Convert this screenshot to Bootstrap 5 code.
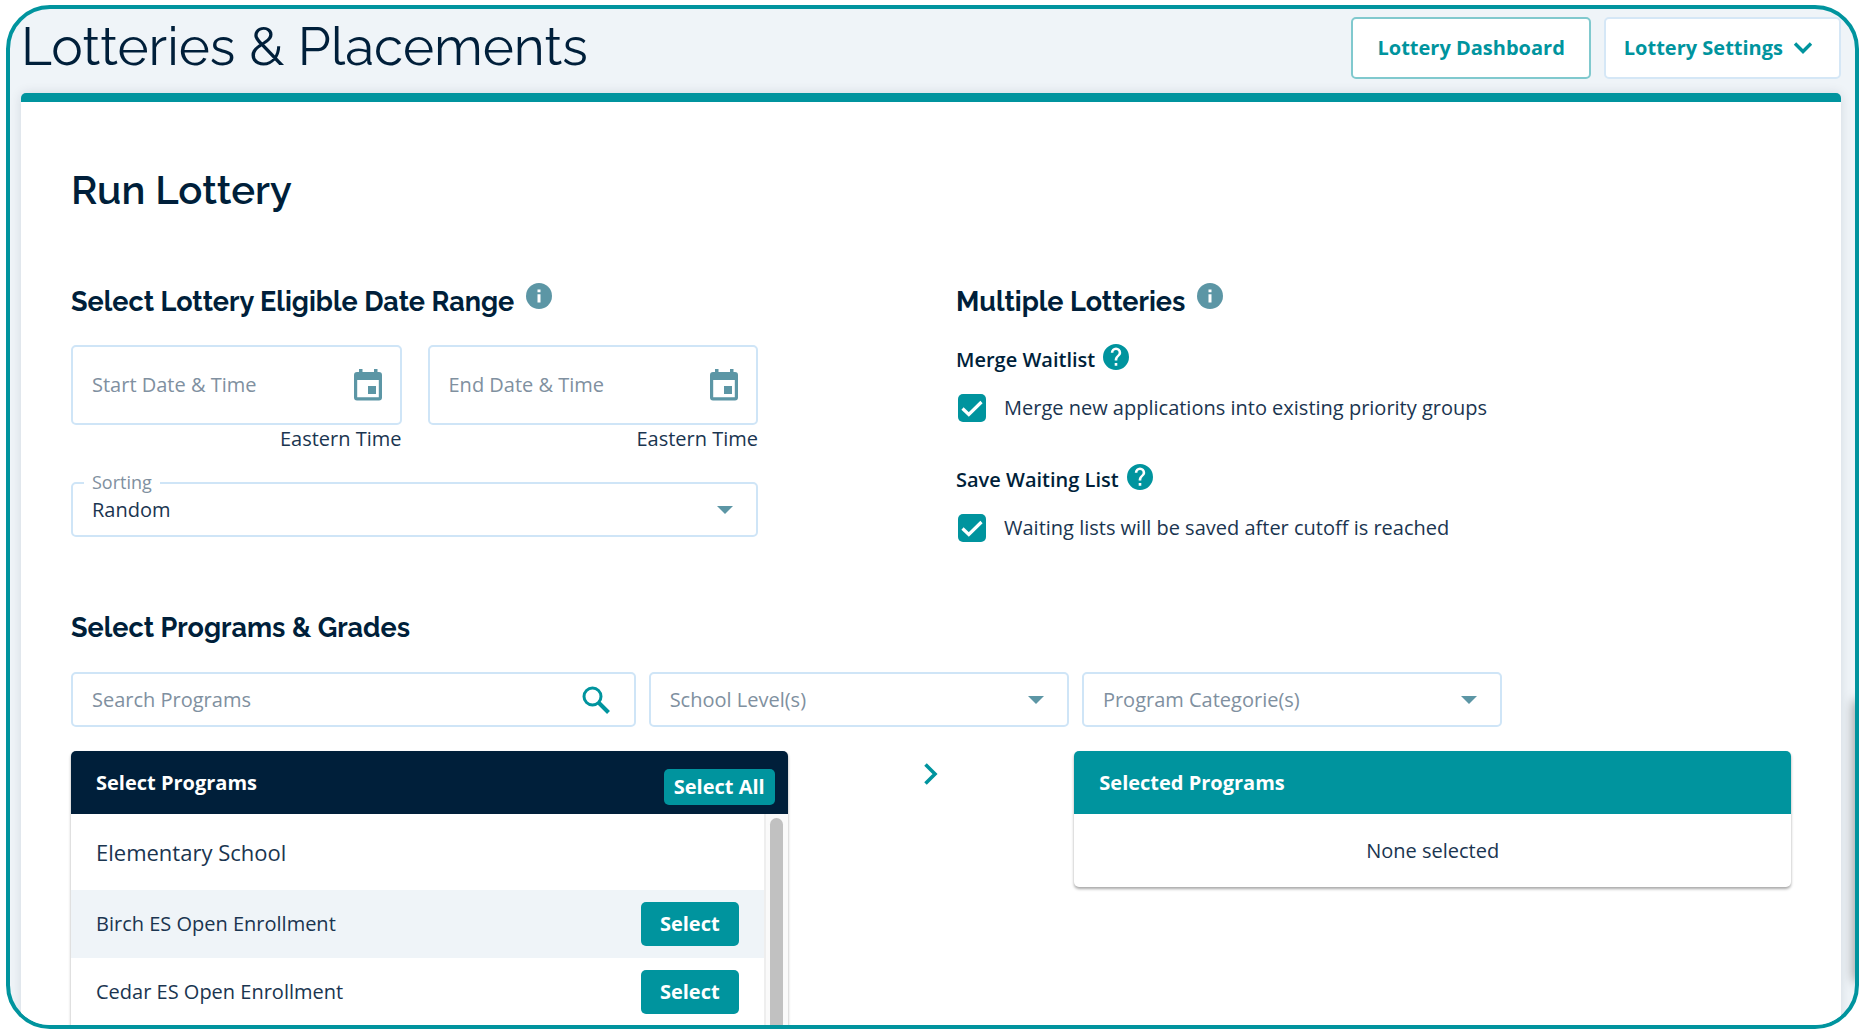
<!DOCTYPE html>
<html lang="en">
<head>
<meta charset="utf-8">
<meta name="viewport" content="width=device-width, initial-scale=1">
<title>Lotteries &amp; Placements</title>
<link href="https://cdn.jsdelivr.net/npm/bootstrap@5.3.0/dist/css/bootstrap.min.css" rel="stylesheet">
<style>
:root{--teal:#00949e;--navy:#001f3a;--ink:#1a3550;--muted-ink:#8090a0;--slate:#5c96a5;--line:#cfe5f7;--mist:#eff4f8}
body{font-family:"Open Sans","Noto Sans",sans-serif;font-size:20px;line-height:28px;color:var(--ink);background:#fff}
h1,h2,h3{font-family:Raleway,Lato,sans-serif;color:var(--navy);margin:0}
h1{font-size:53px;line-height:58px;font-weight:400}
h2{font-size:40px;line-height:48px;font-weight:600}
h3{font-size:27px;line-height:36px;font-weight:700}
svg{display:block;flex:none}
.app-frame{position:relative;height:calc(100vh - 11px);margin:5px 6px 6px;padding:0 14px 0 11px;border:4px solid var(--teal);border-radius:44px;background:var(--mist);overflow:hidden}
.app-header{height:84px;padding:8px 0 14px}
.app-header .btn{height:62px;background:#fff;color:var(--teal);font-size:20px;font-weight:700;border-radius:5px}
.header-actions{gap:13px}
.btn-dash{border:2px solid #80c9ce;padding:0 24px}
.btn-settings{border:2px solid #d5e7f6;padding:0 26px 0 18px;gap:10px}
.app-panel{background:#fff;border-top:9px solid var(--teal);border-radius:5px;padding:64px 50px 0;box-shadow:0 0 12px rgba(0,31,58,.12);min-height:100%}
.wide-row{--bs-gutter-x:50px;padding-top:66px}
.filter-row{--bs-gutter-x:13px;margin-top:26px}
.section-title svg{margin-top:3px}
.programs-title{padding-top:68px}
.fields{max-width:687px;padding-top:25px}
.field-pair{gap:26px}
.field-box{border:2px solid var(--line);border-radius:5px;padding:0 18px 0 19px;background:#fff}
.field-box input{flex:1;min-width:0;border:0;outline:0;padding:0;background:transparent;color:var(--ink)}
input::placeholder{color:var(--muted-ink);opacity:1}
.date-box{height:80px}
.filter-box{height:55px;padding-right:20px}
.field-box button,.plain-btn{border:0;background:none;padding:0}
.form-select{height:55px;font-size:20px;line-height:28px;padding:0 60px 0 19px;border:2px solid var(--line);border-radius:5px;color:var(--muted-ink);background-color:#fff;background-size:16px 8px;background-position:right 23px center;background-image:url("data:image/svg+xml,%3Csvg xmlns='http://www.w3.org/2000/svg' viewBox='0 0 16 8'%3E%3Cpath d='M0 0h16L8 8z' fill='%235c96a5'/%3E%3C/svg%3E")}
.sorting{position:relative;margin-top:29px}
.sorting label{position:absolute;left:13px;top:-14px;padding:0 8px;background:#fff;color:var(--muted-ink);font-size:18px}
.sorting .form-select{color:var(--ink)}
.opt-title{font-size:20px;font-weight:600;color:var(--navy);margin-top:18px}
.opt-title svg{margin-top:2px}
.opt-next{margin-top:36px}
.opt-check{margin-top:20px}
.opt-check label{padding-left:18px}
.form-check-input{width:28px;height:28px;margin:0 0 0 2px;border:0;border-radius:4px;flex:none}
.form-check-input:checked{background-color:var(--teal);background-size:24px 24px;background-image:url("data:image/svg+xml,%3Csvg xmlns='http://www.w3.org/2000/svg' viewBox='0 0 24 24'%3E%3Cpath d='M2.5 12.5l6.300 6L21.500 6' fill='none' stroke='%23fff' stroke-width='3.200'/%3E%3C/svg%3E")}
.program-list{border-radius:5px;box-shadow:0 2px 3px rgba(0,0,0,.35);overflow:hidden}
.list-head{height:63px;color:#fff;font-weight:700;padding:0 13px 0 25px}
.head-navy{background:var(--navy)}
.head-teal{background:var(--teal)}
.btn-teal{--bs-btn-color:#fff;--bs-btn-bg:var(--teal);--bs-btn-hover-color:#fff;--bs-btn-hover-bg:#007f88;border:0;font-size:20px;line-height:28px;font-weight:700;border-radius:5px}
.btn-all{padding:4px 10px;margin-top:8px}
.btn-pick{padding:8px 19px}
.list-line{height:68px;padding:0 25px}
.list-line.group-line{height:76px;font-size:22px}
.list-line.tinted{background:var(--mist)}
.scroll-rail{width:24px;border-left:2px solid #eee;background:#fafafa;padding:4px 4px 0}
.scroll-thumb{width:13px;height:100%;border-radius:7px 7px 0 0;background:#c1c1c1}
.list-rows{min-height:240px}
.empty-note{height:73px}
.drawer-edge{position:absolute;right:-6px;top:692px;width:6px;height:280px;box-shadow:0 0 12px rgba(0,0,0,.6)}
</style>
</head>
<body>
<div class="app-frame">
  <header class="app-header d-flex justify-content-between align-items-start">
    <h1>Lotteries &amp; Placements</h1>
    <div class="d-flex header-actions">
      <button type="button" class="btn btn-dash">Lottery Dashboard</button>
      <button type="button" class="btn btn-settings d-flex align-items-center">Lottery Settings
        <svg width="20" height="14" viewBox="0 0 20 14"><path d="M2 2.500l8 8 8-8" fill="none" stroke="#00949e" stroke-width="3.400"/></svg>
      </button>
    </div>
  </header>
  <main class="app-panel">
    <h2>Run Lottery</h2>
    <div class="row wide-row">
      <section class="col-6">
        <div class="section-title d-flex align-items-start gap-2">
          <h3 class="pt-1">Select Lottery Eligible Date Range</h3>
          <svg class="ms-1" width="26" height="26" viewBox="0 0 26 26"><circle cx="13" cy="13" r="13" fill="#5c96a5"/><path d="M11.500 6.500h3v2.800h-3zM11.500 11.200h3v8.400h-3z" fill="#fff"/></svg>
        </div>
        <div class="fields">
          <div class="d-flex field-pair">
            <div class="flex-fill">
              <div class="field-box date-box d-flex align-items-center">
                <input type="text" placeholder="Start Date &amp; Time" aria-label="Start Date &amp; Time">
                <button type="button" aria-label="Pick start date"><svg width="28" height="32" viewBox="0 0 28 32"><path d="M5 0h3.500v3H20V0h3.500v3H25a3 3 0 0 1 3 3v22.500a3 3 0 0 1-3 3H3a3 3 0 0 1-3-3V6a3 3 0 0 1 3-3h2zM3.200 11v17.300h21.600V11zM14 17h8v8h-8z" fill="#5c96a5" fill-rule="evenodd"/></svg></button>
              </div>
              <div class="text-end">Eastern Time</div>
            </div>
            <div class="flex-fill">
              <div class="field-box date-box d-flex align-items-center">
                <input type="text" placeholder="End Date &amp; Time" aria-label="End Date &amp; Time">
                <button type="button" aria-label="Pick end date"><svg width="28" height="32" viewBox="0 0 28 32"><path d="M5 0h3.500v3H20V0h3.500v3H25a3 3 0 0 1 3 3v22.500a3 3 0 0 1-3 3H3a3 3 0 0 1-3-3V6a3 3 0 0 1 3-3h2zM3.200 11v17.300h21.600V11zM14 17h8v8h-8z" fill="#5c96a5" fill-rule="evenodd"/></svg></button>
              </div>
              <div class="text-end">Eastern Time</div>
            </div>
          </div>
          <div class="sorting">
            <select class="form-select" id="sorting"><option>Random</option></select>
            <label for="sorting">Sorting</label>
          </div>
        </div>
      </section>
      <section class="col-6">
        <div class="section-title d-flex align-items-start gap-2">
          <h3 class="pt-1">Multiple Lotteries</h3>
          <svg class="ms-1" width="26" height="26" viewBox="0 0 26 26"><circle cx="13" cy="13" r="13" fill="#5c96a5"/><path d="M11.500 6.500h3v2.800h-3zM11.500 11.200h3v8.400h-3z" fill="#fff"/></svg>
        </div>
        <div class="d-flex align-items-start gap-2 opt-title pt-1">
          <span class="pt-1">Merge Waitlist</span>
          <svg width="26" height="26" viewBox="0 0 24 24"><path d="M12 0a12 12 0 1 0 0 24 12 12 0 0 0 0-24zm1.200 20h-2.400v-2.400h2.400zm2.500-9.300l-1.100 1.100c-.9.900-1.400 1.600-1.400 3.400h-2.400v-.6c0-1.300.5-2.500 1.400-3.400l1.500-1.500c.4-.4.700-1 .7-1.700a2.400 2.400 0 0 0-4.800 0H7.200a4.800 4.800 0 0 1 9.600 0c0 1-.4 2-1.100 2.700z" fill="#00949e"/></svg>
        </div>
        <div class="d-flex align-items-center opt-check">
          <input class="form-check-input" type="checkbox" id="merge" checked>
          <label for="merge">Merge new applications into existing priority groups</label>
        </div>
        <div class="d-flex align-items-start gap-2 opt-title opt-next pt-1">
          <span class="pt-1">Save Waiting List</span>
          <svg width="26" height="26" viewBox="0 0 24 24"><path d="M12 0a12 12 0 1 0 0 24 12 12 0 0 0 0-24zm1.200 20h-2.400v-2.400h2.400zm2.500-9.300l-1.100 1.100c-.9.900-1.400 1.600-1.400 3.400h-2.400v-.6c0-1.300.5-2.500 1.400-3.400l1.500-1.500c.4-.4.700-1 .7-1.700a2.400 2.400 0 0 0-4.800 0H7.200a4.800 4.800 0 0 1 9.600 0c0 1-.4 2-1.100 2.700z" fill="#00949e"/></svg>
        </div>
        <div class="d-flex align-items-center opt-check">
          <input class="form-check-input" type="checkbox" id="save" checked>
          <label for="save">Waiting lists will be saved after cutoff is reached</label>
        </div>
      </section>
    </div>
    <h3 class="programs-title">Select Programs &amp; Grades</h3>
    <div class="row filter-row">
      <div class="col-4">
        <div class="field-box filter-box d-flex align-items-center">
          <input type="search" placeholder="Search Programs" aria-label="Search Programs">
          <button type="button" class="me-1" aria-label="Search"><svg width="28" height="28" viewBox="0 0 28 28"><circle cx="10.500" cy="10.500" r="8.500" fill="none" stroke="#00949e" stroke-width="3"/><path d="M16.500 16.500l10 10" stroke="#00949e" stroke-width="4"/></svg></button>
        </div>
      </div>
      <div class="col-3"><select class="form-select" aria-label="School Level(s)"><option>School Level(s)</option></select></div>
      <div class="col-3"><select class="form-select" aria-label="Program Categorie(s)"><option>Program Categorie(s)</option></select></div>
    </div>
    <div class="row g-0 mt-4 align-items-start">
      <div class="col-5 program-list">
        <div class="list-head head-navy d-flex justify-content-between align-items-center">Select Programs
          <button type="button" class="btn btn-teal btn-all">Select All</button>
        </div>
        <div class="d-flex list-rows">
          <div class="flex-fill">
            <div class="list-line group-line d-flex align-items-center">Elementary School</div>
            <div class="list-line tinted d-flex align-items-center justify-content-between">Birch ES Open Enrollment<button type="button" class="btn btn-teal btn-pick">Select</button></div>
            <div class="list-line d-flex align-items-center justify-content-between">Cedar ES Open Enrollment<button type="button" class="btn btn-teal btn-pick">Select</button></div>
          </div>
          <div class="scroll-rail"><div class="scroll-thumb"></div></div>
        </div>
      </div>
      <div class="col-2 d-flex justify-content-center">
        <button type="button" class="plain-btn" aria-label="Move selected"><svg width="16" height="46" viewBox="0 0 16 46"><path d="M2.500 13.500l9.500 9.500-9.500 9.500" fill="none" stroke="#00949e" stroke-width="3.600"/></svg></button>
      </div>
      <div class="col-5 program-list">
        <div class="list-head head-teal d-flex align-items-center">Selected Programs</div>
        <div class="empty-note d-flex align-items-center justify-content-center">None selected</div>
      </div>
    </div>
  </main>
  <div class="drawer-edge"></div>
</div>
<script src="https://cdn.jsdelivr.net/npm/bootstrap@5.3.0/dist/js/bootstrap.bundle.min.js"></script>
</body>
</html>
